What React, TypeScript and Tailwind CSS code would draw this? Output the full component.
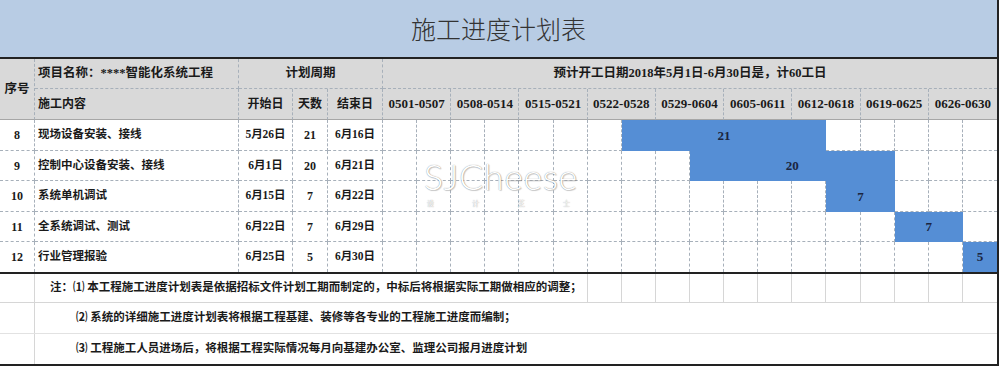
import React from "react";

type Row = {
  n: string;
  name: string;
  s: string;
  d: string;
  e: string;
  start: number;
  span: number;
};

const rows: Row[] = [
  { n: "8", name: "现场设备安装、接线", s: "5月26日", d: "21", e: "6月16日", start: 7, span: 6 },
  { n: "9", name: "控制中心设备安装、接线", s: "6月1日", d: "20", e: "6月21日", start: 9, span: 6 },
  { n: "10", name: "系统单机调试", s: "6月15日", d: "7", e: "6月22日", start: 13, span: 2 },
  { n: "11", name: "全系统调试、测试", s: "6月22日", d: "7", e: "6月29日", start: 15, span: 2 },
  { n: "12", name: "行业管理报验", s: "6月25日", d: "5", e: "6月30日", start: 17, span: 1 },
];

const weeks = [
  "0501-0507",
  "0508-0514",
  "0515-0521",
  "0522-0528",
  "0529-0604",
  "0605-0611",
  "0612-0618",
  "0619-0625",
  "0626-0630",
];

const spanClass: Record<number, string> = {
  1: "col-span-1",
  2: "col-span-2",
  6: "col-span-6",
};

const DASH = "border-dashed border-[#a7b0ba]";
const HDR = "bg-[#d9d9d9]";

function DataRow({ r, last }: { r: Row; last: boolean }) {
  const bb = last ? "" : "border-b";
  const cells: React.ReactNode[] = [];
  let i = 0;
  while (i < 18) {
    if (i === r.start) {
      cells.push(
        <div
          key={`bar-${i}`}
          className={`${spanClass[r.span]} bg-[#558ed5] flex items-center justify-center text-[13px] font-bold text-[#1b2540]`}
        >
          {r.d}
        </div>
      );
      i += r.span;
    } else {
      cells.push(
        <div
          key={`c-${i}`}
          className={`${DASH} ${bb} ${i === 17 ? "" : "border-r"} bg-white`}
        />
      );
      i += 1;
    }
  }
  return (
    <>
      <div className={`${DASH} ${bb} border-r flex items-center justify-center text-[12px] font-bold`}>{r.n}</div>
      <div className={`${DASH} ${bb} border-r flex items-center pl-[3px] text-[11.5px] font-bold whitespace-nowrap`}>{r.name}</div>
      <div className={`${DASH} ${bb} border-r flex items-center justify-center text-[11.5px] font-bold whitespace-nowrap`}>{r.s}</div>
      <div className={`${DASH} ${bb} border-r flex items-center justify-center text-[12px] font-bold`}>{r.d}</div>
      <div className={`${DASH} ${bb} border-r flex items-center justify-center text-[11.5px] font-bold whitespace-nowrap`}>{r.e}</div>
      {cells}
    </>
  );
}

export default function App() {
  const halfIdx = Array.from({ length: 12 }, (_, k) => k + 6);
  return (
    <div className="relative w-[1000px] h-[367px] bg-white overflow-hidden text-[#1a1a1a] font-['Liberation_Serif','Noto_Sans_CJK_SC',serif]">
      <div className="w-[999px] border-r-2 border-r-[#222]">
        {/* Title */}
        <div className="h-[59px] bg-[#b8cce4] border-b-2 border-b-[#222] flex items-center justify-center">
          <span className="text-[25px] leading-none text-[#333] font-['Noto_Sans_CJK_SC',sans-serif] font-light">
            施工进度计划表
          </span>
        </div>

        {/* Header + data grid */}
        <div className="grid grid-cols-[35px_204px_54px_35px_55px_repeat(18,minmax(0,1fr))] grid-rows-[30px_31px_31px_30px_31px_30px_30px]">
          {/* header row 1 */}
          <div className={`row-span-2 ${HDR} ${DASH} border-r border-b [border-bottom-style:solid] border-b-[#a6a6a6] flex items-center justify-center text-[12.5px] font-bold`}>
            序号
          </div>
          <div className={`${HDR} ${DASH} border-r border-b flex items-center pl-[3px] text-[12.5px] font-bold whitespace-nowrap`}>
            项目名称：****智能化系统工程
          </div>
          <div className={`col-span-3 ${HDR} ${DASH} border-r border-b flex items-center justify-center text-[12.5px] font-bold`}>
            计划周期
          </div>
          <div className={`col-span-18 ${HDR} ${DASH} border-b flex items-center justify-center text-[12.5px] font-bold whitespace-nowrap`}>
            预计开工日期2018年5月1日-6月30日是，计60工日
          </div>

          {/* header row 2 */}
          <div className={`${HDR} ${DASH} border-r border-b [border-bottom-style:solid] border-b-[#a6a6a6] flex items-center pl-[3px] text-[12px] font-bold`}>
            施工内容
          </div>
          <div className={`${HDR} ${DASH} border-r border-b [border-bottom-style:solid] border-b-[#a6a6a6] flex items-center justify-center text-[12px] font-bold`}>
            开始日
          </div>
          <div className={`${HDR} ${DASH} border-r border-b [border-bottom-style:solid] border-b-[#a6a6a6] flex items-center justify-center text-[12px] font-bold`}>
            天数
          </div>
          <div className={`${HDR} ${DASH} border-r border-b [border-bottom-style:solid] border-b-[#a6a6a6] flex items-center justify-center text-[12px] font-bold`}>
            结束日
          </div>
          {weeks.map((w, k) => (
            <div
              key={w}
              className={`col-span-2 ${HDR} ${DASH} ${k === 8 ? "" : "border-r"} border-b [border-bottom-style:solid] border-b-[#a6a6a6] flex items-center justify-center text-[13px] font-bold whitespace-nowrap`}
            >
              {w}
            </div>
          ))}

          {rows.map((r, idx) => (
            <DataRow key={r.n} r={r} last={idx === rows.length - 1} />
          ))}
        </div>

        {/* Notes */}
        <div className="border-t-2 border-t-[#222] border-b-2 border-b-[#222] text-[11.5px] font-bold">
          <div className="grid grid-cols-[35px_204px_54px_35px_55px_repeat(18,minmax(0,1fr))] h-[29px] border-b border-b-[#d6d6d6]">
            <div className="border-r border-r-[#d6d6d6]" />
            <div className="col-span-10 border-r border-r-[#d6d6d6] flex items-center pl-[15px] whitespace-nowrap">
              注：⑴ 本工程施工进度计划表是依据招标文件计划工期而制定的，中标后将根据实际工期做相应的调整；
            </div>
            {halfIdx.map((k) => (
              <div key={k} className={k === 17 ? "" : "border-r border-r-[#d6d6d6]"} />
            ))}
          </div>
          <div className="flex h-[31px] border-b border-b-[#e2e2e2]">
            <div className="w-[35px] border-r border-r-[#d6d6d6]" />
            <div className="flex items-center pl-[41px] whitespace-nowrap">
              ⑵ 系统的详细施工进度计划表将根据工程基建、装修等各专业的工程施工进度而编制；
            </div>
          </div>
          <div className="flex h-[30px]">
            <div className="w-[35px] border-r border-r-[#d6d6d6]" />
            <div className="flex items-center pl-[41px] whitespace-nowrap">
              ⑶ 工程施工人员进场后，将根据工程实际情况每月向基建办公室、监理公司报月进度计划
            </div>
          </div>
        </div>
      </div>

      {/* Watermark */}
      <div className="absolute left-[424px] top-[158px] pointer-events-none select-none">
        <div className="text-[36px] leading-none font-['Lato',sans-serif] font-light text-white tracking-[0.5px] [text-shadow:0_0_1px_rgba(0,0,0,0.5),1px_1px_1px_rgba(0,0,0,0.18)]">
          SJCheese
        </div>
        <div className="flex justify-between w-[146px] pl-[3px] mt-[6px] text-[7px] leading-none font-['Noto_Sans_CJK_SC',sans-serif] text-white [text-shadow:0_0_1px_rgba(0,0,0,0.5)]">
          <span>设</span>
          <span>计</span>
          <span>芝</span>
          <span>士</span>
        </div>
      </div>
    </div>
  );
}
